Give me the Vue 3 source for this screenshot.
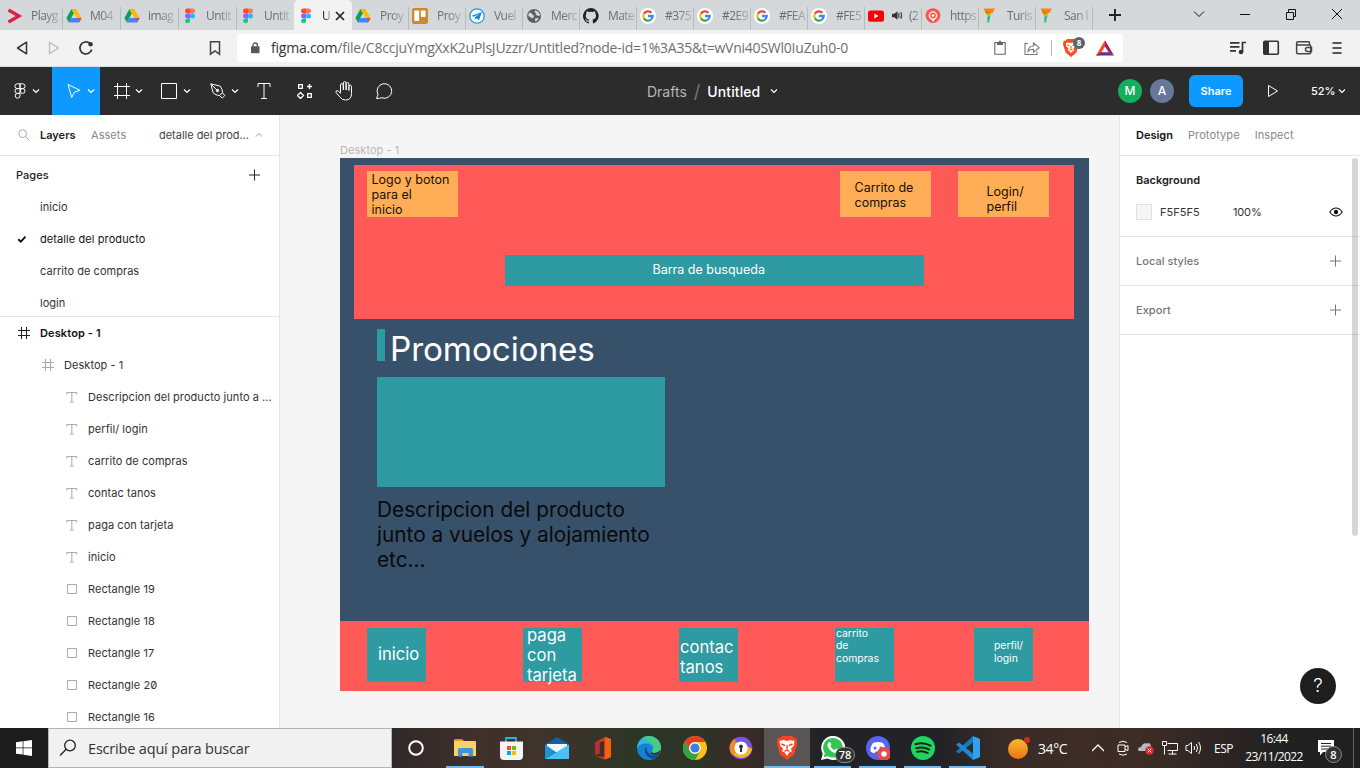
<script setup>
const tabs = [
  { icon: 'play', label: 'Playg' },
  { icon: 'drive', label: 'M04' },
  { icon: 'drive', label: 'imag' },
  { icon: 'figma', label: 'Untit' },
  { icon: 'figma', label: 'Untit' },
  { icon: 'figma', label: 'U', active: true },
  { icon: 'drive', label: 'Proy' },
  { icon: 'trello', label: 'Proy' },
  { icon: 'plane', label: 'Vuel' },
  { icon: 'globe', label: 'Merc' },
  { icon: 'github', label: 'Mate' },
  { icon: 'google', label: '#375' },
  { icon: 'google', label: '#2E9' },
  { icon: 'google', label: '#FEA' },
  { icon: 'google', label: '#FE5' },
  { icon: 'youtube', label: '(2', sound: true },
  { icon: 'pin', label: 'https' },
  { icon: 'turismo', label: 'Turis' },
  { icon: 'turismo', label: 'San l' },
]
const pages = [
  { name: 'inicio' },
  { name: 'detalle del producto', current: true },
  { name: 'carrito de compras' },
  { name: 'login' },
]
const layers = [
  { type: 'frame', name: 'Desktop - 1', level: 0 },
  { type: 'frame', name: 'Desktop - 1', level: 1 },
  { type: 'text', name: 'Descripcion del producto junto a ...', level: 2 },
  { type: 'text', name: 'perfil/ login', level: 2 },
  { type: 'text', name: 'carrito de compras', level: 2 },
  { type: 'text', name: 'contac tanos', level: 2 },
  { type: 'text', name: 'paga con tarjeta', level: 2 },
  { type: 'text', name: 'inicio', level: 2 },
  { type: 'rect', name: 'Rectangle 19', level: 2 },
  { type: 'rect', name: 'Rectangle 18', level: 2 },
  { type: 'rect', name: 'Rectangle 17', level: 2 },
  { type: 'rect', name: 'Rectangle 20', level: 2 },
  { type: 'rect', name: 'Rectangle 16', level: 2 },
]
const apps = [
  { id: 'explorer', open: true },
  { id: 'store' },
  { id: 'mail' },
  { id: 'office' },
  { id: 'edge' },
  { id: 'chrome' },
  { id: 'vpn' },
  { id: 'brave', open: true, active: true },
  { id: 'whatsapp', open: true },
  { id: 'discord', open: true },
  { id: 'spotify', open: true },
  { id: 'vscode', open: true },
]
</script>

<template>
  <div class="screen">
    <!-- Browser tab strip -->
    <header class="tabstrip">
      <div v-for="(t, i) in tabs" :key="i" class="tab" :class="{ active: t.active, late: i > 5, before: i === 4 }">
        <svg v-if="t.icon === 'play'" class="fav" viewBox="0 0 16 16"><path d="M1.5 2 12 8 1.5 14" fill="none" stroke="#dc1f43" stroke-width="3.2" /></svg>
        <svg v-else-if="t.icon === 'drive'" class="fav" viewBox="0 0 16 16">
          <path d="M5.3 1.3h5.2L5.4 10 2.9 14.4.4 10z" fill="#0f9d58" />
          <path d="M5.3 1.3h5.2l5.1 8.8h-5.2z" fill="#fbbc05" />
          <path d="M5.4 10.1h10.2L13 14.5H2.9z" fill="#4285f4" /><path d="M12.5 10.1h3.1L13 14.5z" fill="#ea4335" />
          <path d="m8 5.6 2.5 4.5H5.4z" fill="#d5d8da" />
        </svg>
        <svg v-else-if="t.icon === 'figma'" class="fav" viewBox="0 0 16 16">
          <path d="M8 .6H5.4a2.45 2.45 0 0 0 0 4.9H8z" fill="#f24e1e" /><path d="M8 .6h2.6a2.45 2.45 0 0 1 0 4.9H8z" fill="#ff7262" />
          <path d="M8 5.5H5.4a2.45 2.45 0 0 0 0 4.9H8z" fill="#a259ff" /><circle cx="10.5" cy="8" r="2.5" fill="#1abcfe" />
          <path d="M8 10.4H5.4A2.45 2.45 0 1 0 8 12.9z" fill="#0acf83" />
        </svg>
        <svg v-else-if="t.icon === 'trello'" class="fav" viewBox="0 0 16 16"><rect width="16" height="16" rx="2" fill="#cd8a33" /><rect x="2.3" y="2.5" width="4.8" height="10.5" rx=".8" fill="#fff" /><rect x="8.8" y="2.5" width="4.8" height="6.6" rx=".8" fill="#fff" /></svg>
        <svg v-else-if="t.icon === 'plane'" class="fav" viewBox="0 0 16 16"><circle cx="8" cy="8" r="7.2" fill="#fff" stroke="#2394ea" stroke-width="1.3" /><path d="M2.6 7.7 13 4l-3 8.2-2.5-2-1.6 1.5V9.2L10.5 6 4.6 8.7z" fill="#1687e0" /></svg>
        <svg v-else-if="t.icon === 'globe'" class="fav" viewBox="0 0 16 16"><circle cx="8" cy="8" r="7" fill="#5b5f63" /><path d="M3 4.8c2-.2 3 .4 3.3 1.5.3 1 1.7.8 1.7 2s-1.4 1-1.4 2.4L5 9.6 2.2 8zM9 2.4 8.4 4l1.8 1.2-.8 1.3 3 1.5 1.7-.4C13.8 5 12 2.7 9 2.4zM9 10.6l3.6-.6c-.2 1.7-1.6 3-3.5 3.6z" fill="#d5d8da" /></svg>
        <svg v-else-if="t.icon === 'github'" class="fav" viewBox="0 0 16 16"><path d="M8 0a8 8 0 0 0-2.500 15.600c.4.1.5-.2.5-.4v-1.500c-2 .5-2.600-.5-2.800-1-.1-.3-.5-1-.9-1.200-.3-.2-.7-.6 0-.6s1.100.6 1.300.9c.7 1.200 1.900.9 2.300.7.1-.5.3-.9.5-1.100-1.800-.2-3.600-.9-3.600-4 0-.8.3-1.600.8-2.100-.1-.2-.4-1 .1-2.100 0 0 .7-.2 2.200.8a7.600 7.600 0 0 1 4 0c1.500-1 2.200-.8 2.200-.8.4 1.100.2 1.900.1 2.100.5.6.8 1.300.8 2.100 0 3.100-1.900 3.800-3.700 4 .3.3.6.7.6 1.500v2.200c0 .2.1.5.5.4A8 8 0 0 0 8 0z" fill="#1f2328" /></svg>
        <svg v-else-if="t.icon === 'google'" class="fav" viewBox="0 0 16 16">
          <circle cx="8" cy="8" r="8" fill="#fff" />
          <g fill="none" stroke-width="2.3"><path d="M11.4 4.7A4.700 4.700 0 0 0 3.900 5.800" stroke="#ea4335" /><path d="M3.900 5.700a4.700 4.700 0 0 0 0 4.600" stroke="#fbbc05" /><path d="M3.900 10.200a4.700 4.700 0 0 0 7.200 1.300" stroke="#34a853" /><path d="M11.100 11.500A4.700 4.700 0 0 0 12.700 8H8" stroke="#4285f4" /></g>
        </svg>
        <svg v-else-if="t.icon === 'youtube'" class="fav" viewBox="0 0 16 16"><rect y="2.500" width="16" height="11.200" rx="2.500" fill="#f00" /><path d="m6.300 5.600 4.200 2.500-4.200 2.500z" fill="#fff" /></svg>
        <svg v-else-if="t.icon === 'pin'" class="fav" viewBox="0 0 16 16"><circle cx="8" cy="7.600" r="7.400" fill="#fb564b" /><path d="M6.400 11.600a4.300 4.300 0 1 1 3.200 0L8.200 14z" fill="#fff" /><circle cx="8" cy="7.500" r="2.900" fill="#fb564b" /><circle cx="8" cy="7.500" r="1.300" fill="#fff" /></svg>
        <svg v-else class="fav" viewBox="0 0 16 16"><path d="M1.500.4h11.500L10.500 5H4z" fill="#f58510" /><path d="M2.500 2.500 9 5 5.500 8z" fill="#e36b12" /><path d="M5 5.500h5L5.500 11z" fill="#b9c322" /><path d="m5.300 9 3.200-1.500-1.200 6.200-1.900 1.500z" fill="#36b985" /></svg>
        <svg v-if="t.sound" class="snd" viewBox="0 0 12 12"><path d="M0 4h2.500L6 1.300v9.400L2.500 8H0z" fill="#333" /><path d="M7.500 3.300v5.400M9.700 2.300q1.500 3.700 0 7.400" stroke="#333" stroke-width="1.200" fill="none" /></svg>
        <span class="label">{{ t.label }}</span>
        <svg v-if="t.active" class="close" viewBox="0 0 10 10"><path d="m1 1 8 8M9 1 1 9" stroke="#222" stroke-width="1.700" /></svg>
      </div>
      <svg class="newtab" viewBox="0 0 12 12"><path d="M6 0v12M0 6h12" stroke="#222" stroke-width="1.900" /></svg>
      <div class="winctl">
        <svg viewBox="0 0 12 12"><path d="m1 3.500 5 5 5-5" /></svg>
        <svg viewBox="0 0 12 12"><path d="M1 6.500h10" /></svg>
        <svg viewBox="0 0 12 12"><path d="M1.500 4.500h7v7h-7zM3.500 4V1.500h7v7H9" /></svg>
        <svg viewBox="0 0 12 12"><path d="m1 1 10 10M11 1 1 11" /></svg>
      </div>
    </header>

    <!-- Address bar -->
    <div class="addressbar">
      <div class="nav">
        <svg viewBox="0 0 16 16"><path d="M12.500 2.200v11.600L3.500 8z" fill="none" stroke="#333" stroke-width="1.500" stroke-linejoin="round" /></svg>
        <svg viewBox="0 0 16 16"><path d="M3.500 2.200v11.600L12.500 8z" fill="none" stroke="#b9b9b9" stroke-width="1.300" stroke-linejoin="round" /></svg>
        <svg viewBox="0 0 16 16"><path d="M13.700 9.500A6 6 0 1 1 11.800 3.400" fill="none" stroke="#333" stroke-width="1.700" /><circle cx="12.600" cy="4.300" r="2.200" fill="#333" /></svg>
      </div>
      <svg class="bookmark" viewBox="0 0 16 16"><path d="M3.500 1.700h9v12.500L8 11l-4.500 3.200z" fill="none" stroke="#444" stroke-width="1.500" /></svg>
      <div class="field">
        <svg class="lock" viewBox="0 0 10 12"><rect x="1" y="4.300" width="8.500" height="7" rx=".8" fill="#55585c" /><path d="M3 5V3.200a2.200 2.200 0 0 1 4.400 0V5" fill="none" stroke="#55585c" stroke-width="1.300" /></svg>
        <span class="url"><b>figma.com</b>/file/C8ccjuYmgXxK2uPlsJUzzr/Untitled?node-id=1%3A35&amp;t=wVni40SWl0IuZuh0-0</span>
        <svg class="clip" viewBox="0 0 16 16"><path d="M2.800 2.500h10.400v11.700H2.800z" fill="none" stroke="#666" stroke-width="1.100" /><path d="M5 2h6v3H5zM7 .8h2V3H7z" fill="#666" /></svg>
        <svg class="share" viewBox="0 0 16 16"><path d="M4 3.500H1v11h12v-3M4 11.500C4.300 7.500 6.500 6 9.500 6V3l5.700 4.700-5.700 4.500V9.300C7 9.200 5.300 10 4 11.500z" fill="none" stroke="#777" stroke-width="1.100" /></svg>
        <i class="sep"></i>
        <div class="shield">
          <svg viewBox="0 0 16 18"><path d="M4 0h8l1.500 1.700 1.800-.2.700 4-2.700 8.200L8 18l-5.300-4.300L0 5.500l.7-4 1.800.2z" fill="#f4511e" /><path d="m3 4 2.500-.5L8 4l2.500-.5L13 4l-.3 3.500-2.200 1.800.7 2-1.700 1.200L8 14l-1.500-1.500-1.700-1.200.7-2L3.300 7.500z" fill="#fff" /><path d="m4.500 6 2 .7M11.500 6l-2 .7M8 7v2.500M6.500 11 8 10l1.500 1" stroke="#f4511e" fill="none" /></svg>
          <span>8</span>
        </div>
        <svg class="bat" viewBox="0 0 18 16"><path d="M9 .3 0 15.500h3.600L9 6.500z" fill="#ff4724" /><path d="m9 .3 9 15.200-5.200-3.100L9 6.400z" fill="#9e1f63" /><path d="M0 15.500h18l-5.200-3.200H5.400z" fill="#662d91" /></svg>
      </div>
      <div class="browser-tools">
        <svg viewBox="0 0 18 16"><path d="M1 2.800h9.500M1 6.800h9.500M1 10.800h6M13.500 12V2.500H17" stroke="#333" stroke-width="1.700" fill="none" /><circle cx="12" cy="12" r="2.300" fill="#333" /></svg>
        <svg viewBox="0 0 18 16"><rect x="1.800" y="1.300" width="14.500" height="13" rx="1" fill="none" stroke="#333" stroke-width="1.600" /><path d="M2 2h5v12H2z" fill="#333" /></svg>
        <svg viewBox="0 0 18 16"><path d="M14.500 5V2.700q0-1-1-1H3.300q-1.700 0-1.700 1.700v8.900q0 1.500 1.500 1.500h11.200q1.500 0 1.500-1.500V6.400q0-1.400-1.500-1.400H3Q1.600 5 1.600 3.500M16.500 7.500h-4q-2 0-2 2t2 2h4z" fill="none" stroke="#444" stroke-width="1.500" /></svg>
        <svg viewBox="0 0 18 16"><path d="M4.500 3h9M4.500 8h9M4.500 13h9" stroke="#555" stroke-width="1.800" /></svg>
      </div>
    </div>

    <!-- Editor toolbar -->
    <nav class="toolbar">
      <div class="tool menu">
        <svg class="ti" viewBox="0 0 16 16"><path d="M8 .8H5.300a2.350 2.350 0 0 0 0 4.800H8zm0 0h2.700a2.350 2.350 0 0 1 0 4.800H8zM8 5.600H5.300a2.350 2.350 0 0 0 0 4.800H8zM8 10.400H5.300A2.400 2.400 0 1 0 8 12.800z" /><circle cx="10.600" cy="8" r="2.400" /></svg>
        <svg class="chev" viewBox="0 0 8 8"><path d="m1 2.500 3 3 3-3" /></svg>
      </div>
      <div class="tool split move">
        <svg class="ti" viewBox="0 0 16 16"><path d="m2 1.500 12 5.800-5.600 1.900-2.700 5.300z" stroke-linejoin="round" /></svg>
        <svg class="chev" viewBox="0 0 8 8"><path d="m1 2.500 3 3 3-3" /></svg>
      </div>
      <div class="tool split">
        <svg class="ti" viewBox="0 0 16 16"><path d="M3.500 0v16M12.500 0v16M0 3.500h16M0 12.500h16" /></svg>
        <svg class="chev" viewBox="0 0 8 8"><path d="m1 2.500 3 3 3-3" /></svg>
      </div>
      <div class="tool split sq">
        <svg class="ti" viewBox="0 0 16 16"><path d="M.5.500h15v15H.5z" /></svg>
        <svg class="chev" viewBox="0 0 8 8"><path d="m1 2.500 3 3 3-3" /></svg>
      </div>
      <div class="tool split">
        <svg class="ti" viewBox="0 0 16 16"><path d="M.8.800 10.300 3.200q2.400 3.300 2.200 6.600l-3 2.700Q5.800 12.500 3.200 9.800zM1 1l5.600 5.800M12.500 9.800l2.300 2.700-2.600 2.600-2.700-2.600" /><circle cx="7.500" cy="7.500" r="1.200" fill="#fff" /></svg>
        <svg class="chev" viewBox="0 0 8 8"><path d="m1 2.500 3 3 3-3" /></svg>
      </div>
      <div class="tool pull"><svg class="ti" viewBox="0 0 16 16"><path d="M2 4V.500h12V4M8 .5v15M5 15.500h6" /></svg></div>
      <div class="tool resources"><svg class="ti" viewBox="0 0 16 16"><path d="M1.700 1.700h3.600v3.600H1.700zM10.700 10.700h3.600v3.600h-3.600zM12.500 1v5M10 3.500h5M3.500 9.500l3 3-3 3-3-3z" stroke-width="1.300" /></svg></div>
      <div class="tool pull"><svg class="ti hand" viewBox="0 0 18 20"><path d="M5.500 11.500V4a1.400 1.400 0 0 1 2.800 0v5V2a1.400 1.400 0 0 1 2.800 0v7V3a1.400 1.400 0 0 1 2.800 0v6.500V5.500a1.300 1.300 0 0 1 2.600 0v7q0 6.500-6 6.500-3.500 0-5.200-2.500L1 11.500q-.5-1.500 1-1.800 1.300-.1 3.500 2.500z" /></svg></div>
      <div class="tool pull"><svg class="ti comment" viewBox="0 0 18 18"><path d="M1.500 16.500 3 12.500a7.300 7.300 0 1 1 3.800 3.300q-2.300.7-5.300.7z" stroke-linejoin="round" /></svg></div>
      <div class="doc">
        <span class="drafts">Drafts</span><span class="slash">/</span><span class="docname">Untitled</span>
        <svg class="chev" viewBox="0 0 8 8"><path d="m1 2.500 3 3 3-3" /></svg>
      </div>
      <div class="right-tools">
        <span class="avatar green">M</span><span class="avatar blue">A</span>
        <button class="share-btn">Share</button>
        <svg class="present" viewBox="0 0 12 14"><path d="M1.500 1.500 10.500 7l-9 5.500z" fill="none" stroke="#fff" stroke-linejoin="round" /></svg>
        <span class="zoom">52%</span>
        <svg class="chev" viewBox="0 0 8 8"><path d="m1 2.500 3 3 3-3" /></svg>
      </div>
    </nav>

    <main class="editor">
      <aside class="left">
        <div class="lhead">
          <svg class="search" viewBox="0 0 12 12"><circle cx="4.700" cy="4.700" r="3.900" /><path d="m7.600 7.600 3.900 3.900" /></svg>
          <b>Layers</b><span class="assets">Assets</span><span class="pagepick">detalle del prod...</span>
          <svg class="up" viewBox="0 0 8 8"><path d="m1 5.500 3-3 3 3" /></svg>
        </div>
        <section class="pages">
          <div class="phead"><span>Pages</span><svg viewBox="0 0 12 12"><path d="M6.500.500v11M1 6h11" stroke="#222" /></svg></div>
          <div v-for="p in pages" :key="p.name" class="page" :class="{ current: p.current }">
            <svg viewBox="0 0 10 10"><path v-if="p.current" d="m1.300 5.300 2.500 2.400 4.700-5" fill="none" stroke="#111" stroke-width="1.900" /></svg>
            <span>{{ p.name }}</span>
          </div>
        </section>
        <section class="layers">
          <div v-for="(l, i) in layers" :key="i" class="layer" :class="'level' + l.level">
            <svg viewBox="0 0 12 12">
              <path v-if="l.type === 'frame'" d="M3.500 0v12M8.500 0v12M0 3.500h12M0 8.500h12" />
              <path v-else-if="l.type === 'text'" d="M.8 3.500v-2h10v2M5.800 1.500v9.500M4 11h3.600" />
              <path v-else d="M1.500 1.500h9v9h-9z" />
            </svg>
            <span>{{ l.name }}</span>
          </div>
        </section>
      </aside>

      <section class="canvas">
        <span class="frame-name">Desktop - 1</span>
        <div class="artboard">
          <i class="r coral top"></i>
          <i class="r orange o1"></i><i class="r orange o2"></i><i class="r orange o3"></i>
          <i class="r teal find"></i><i class="r teal mark"></i><i class="r teal promo"></i>
          <i class="r coral foot"></i>
          <i class="r teal f1"></i><i class="r teal f2"></i><i class="r teal f3"></i><i class="r teal f4"></i><i class="r teal f5"></i>
          <p class="t12 a1">Logo y boton<br />para el<br />inicio</p>
          <p class="t12 a2">Carrito de<br />compras</p>
          <p class="t12 a3">Login/<br />perfil</p>
          <p class="t12 a4">Barra de busqueda</p>
          <p class="big">Promociones</p>
          <p class="desc">Descripcion del producto<br />junto a vuelos y alojamiento<br />etc...</p>
          <p class="t16 b1">inicio</p>
          <p class="t16 b2">paga<br />con<br />tarjeta</p>
          <p class="t16 b3">contac<br />tanos</p>
          <p class="t10 b4">carrito<br />de<br />compras</p>
          <p class="t10 b5">perfil/<br />login</p>
        </div>
      </section>

      <aside class="inspector">
        <div class="rhead"><b>Design</b><span>Prototype</span><span>Inspect</span></div>
        <section class="bgsec">
          <h3>Background</h3>
          <div class="fill">
            <i class="swatch"></i><span class="hex">F5F5F5</span><span class="pct">100%</span>
            <svg viewBox="0 0 14 10"><path d="M.8 5Q3.500 1 7 1t6.200 4Q10.500 9 7 9T.8 5z" fill="none" stroke="#111" stroke-width="1.200" /><circle cx="7" cy="5" r="2.200" fill="#111" /></svg>
          </div>
        </section>
        <section class="rowsec"><span>Local styles</span><svg viewBox="0 0 12 12"><path d="M6.500.5v11M1 6h11" stroke="#777" /></svg></section>
        <section class="rowsec"><span>Export</span><svg viewBox="0 0 12 12"><path d="M6.500.5v11M1 6h11" stroke="#777" /></svg></section>
        <i class="scroll"></i>
        <button class="help">?</button>
      </aside>
    </main>

    <!-- Windows taskbar -->
    <footer class="taskbar">
      <div class="start"><svg viewBox="0 0 16 16"><path d="M0 2.200 6.700 1.300v6.300H0zM7.400 1.200 16 0v7.600H7.400zM0 8.300h6.700v6.300L0 13.700zM7.400 8.300H16V16l-8.600-1.200z" fill="#fff" /></svg></div>
      <div class="searchbox">
        <svg viewBox="0 0 18 18"><circle cx="11" cy="6.500" r="5.300" /><path d="M7.200 10.300 1 16.500" /></svg>
        <span>Escribe aquí para buscar</span>
      </div>
      <div class="cortana"><svg viewBox="0 0 16 16"><circle cx="8" cy="8" r="6.800" fill="none" stroke="#fff" stroke-width="2" /></svg></div>
      <div v-for="a in apps" :key="a.id" class="app" :class="{ open: a.open, active: a.active }">
        <svg v-if="a.id === 'explorer'" viewBox="0 0 24 24"><path d="M1 4q0-1 1-1h7l2 2H1z" fill="#d99a16" /><path d="M1 5h21q1 0 1 1v14H1z" fill="#fcd062" /><path d="M5 13.500q0-1.500 1.500-1.500h12q1.500 0 1.500 1.500v7h-4.500V17h-6v3.500H5z" fill="#3f95d6" /></svg>
        <svg v-else-if="a.id === 'store'" viewBox="0 0 24 24"><path d="M7 7V2h10v5" fill="none" stroke="#20b4e8" stroke-width="1.800" /><path d="M1 5.500h23V20q0 4-4 4H5q-4 0-4-4z" fill="#f4f4f4" /><path d="M8 10h4v4H8z" fill="#f25022" /><path d="M13 10h4v4h-4z" fill="#7fba00" /><path d="M8 15h4v4H8z" fill="#00a4ef" /><path d="M13 15h4v4h-4z" fill="#ffb900" /></svg>
        <svg v-else-if="a.id === 'mail'" viewBox="0 0 24 24"><path d="M0 8.500 12 1l12 7.500V15H0z" fill="#0f60a8" /><path d="M2 8h20v8H2z" fill="#f4f4f4" /><path d="M0 8.500 11 16 0 23z" fill="#218fdc" /><path d="M24 8.500 0 23h24z" fill="#48c2f4" /></svg>
        <svg v-else-if="a.id === 'office'" viewBox="0 0 24 24"><path d="M4 6.500 14 1l6 2v18l-6 2.500-10-3.500 9 1V5L8.500 6.500v11L4 19z" fill="#d3371f" /><path d="m14 1 6 2v18l-6 2.500z" fill="#f2630f" /><path d="M4 6.500 8.500 4v13L4 19z" fill="#c0283c" /></svg>
        <svg v-else-if="a.id === 'edge'" viewBox="0 0 24 24"><circle cx="12" cy="12" r="12" fill="#1782d4" /><path d="M.2 10A12 12 0 0 1 24 11c0 4-3 6-6.500 6-2 0-3.500-1-2-2.500 2-4-2-7.500-7-7Q3 7.500.2 12z" fill="#2cb8d8" /><path d="M12 0a12 12 0 0 1 12 11c0 4-3 6-6.500 6-2 0-3.500-1-2-2.500C18 10 15 5 5 2.300Q8 0 12 0z" fill="#51cf6b" opacity=".8" /><path d="M9 10.500c-3 5 0 11 7 12.500 3-1 5-3 6-5-6 3-12 1-13-7.500z" fill="#0d4e94" /><path d="M15 14.800c-1.300 1.400.5 2.200 2.500 2.200q3.500-.2 5.500-2.800L22 18q-4 1.800-8.500-.5Z" fill="#322f29" /></svg>
        <svg v-else-if="a.id === 'chrome'" viewBox="0 0 24 24"><circle cx="12" cy="12" r="12" fill="#fbc116" /><path d="M1.600 6A12 12 0 0 1 22.400 6H12a6 6 0 0 0-5.200 9z" fill="#e33b2e" /><path d="M1.600 6A12 12 0 0 0 12 24l5.200-9A6 6 0 0 1 6.800 15z" fill="#2fa24c" /><circle cx="12" cy="12" r="5.800" fill="#fff" /><circle cx="12" cy="12" r="4.600" fill="#3c7dea" /></svg>
        <svg v-else-if="a.id === 'vpn'" viewBox="0 0 24 24"><circle cx="12" cy="12" r="11.300" fill="#7a55e0" /><path d="M.9 9.500A11.300 11.300 0 0 0 23.200 13l-5-3-12-4z" fill="#f4b62c" /><path d="M6 2.400A11.300 11.300 0 0 0 3 19l5-3z" fill="#f0882c" /><circle cx="12" cy="12" r="6.600" fill="#fff" /><path d="M12 8.500a2 2 0 0 1 1 3.700V16h-2v-3.800a2 2 0 0 1 1-3.700z" fill="#303044" /></svg>
        <svg v-else-if="a.id === 'brave'" viewBox="0 0 24 24"><path d="M7 0h10l2 2 2.500.3.700 5-3 11L12 24l-7.200-5.700-3-11 .7-5L5 2z" fill="#fb4322" /><path d="m4.500 5 4-1L12 5l3.500-1 4 1-.8 5-2.700 2.500.8 3-2.600 1L12 20l-2.200-3.500-2.600-1 .8-3L5.300 10z" fill="#fff" /><path d="m6.500 8 3.500 1.500M17.500 8 14 9.500M12 9v4M9.500 15.500l2.500-1.700 2.500 1.700" stroke="#fb4322" stroke-width="1.400" fill="none" /></svg>
        <svg v-else-if="a.id === 'whatsapp'" viewBox="0 0 24 24"><path d="m0 24 1.700-6.200A12 12 0 1 1 6.300 22.400z" fill="#fff" /><path d="m2.700 21.300 1.100-4A9.800 9.800 0 1 1 6.900 20.200z" fill="#31c553" /><path d="M7.500 6.500q1.500-1 2 .2l.8 2-.9 1.500q1.400 2.700 4.300 3.900l1.400-1.600 2.700 1.300q.3 3-3 3.400-5-.6-8.200-6.600-.5-2.600.9-4.100z" fill="#fff" /></svg>
        <svg v-else-if="a.id === 'discord'" viewBox="0 0 24 24"><circle cx="12" cy="12" r="12" fill="#5964ec" /><path d="M7 7q5-2 10 0 3 4 2.500 8.500-2 1.700-4 1.700l-1-1.700h-5l-1 1.700q-2 0-4-1.700Q4 11 7 7z" fill="#fff" /><circle cx="9" cy="12" r="1.500" fill="#5964ec" /><circle cx="15" cy="12" r="1.500" fill="#5964ec" /><circle cx="18" cy="18" r="7" fill="#e44d4f" /><circle cx="18" cy="18" r="2.700" fill="#fff" /></svg>
        <svg v-else-if="a.id === 'spotify'" viewBox="0 0 24 24"><circle cx="12" cy="12" r="12" fill="#1fd661" /><path d="M4.500 8.200q8-2.400 15 1.500M5.300 12.200q7-2 12.800 1.300M6 15.800q6-1.600 10.700 1.200" fill="none" stroke="#172119" stroke-width="2" stroke-linecap="round" /></svg>
        <svg v-else viewBox="0 0 24 24"><path d="m17 0 7 3v18l-7 3z" fill="#30a2ed" /><path d="M17 0v6.500L3 17.500 0 15.500z" fill="#1479bd" /><path d="M17 24v-6.500L3 6.500 0 8.500z" fill="#2087d0" /></svg>
        <span v-if="a.id === 'whatsapp'" class="badge">78</span>
      </div>
      <div class="tray">
        <svg class="sun" viewBox="0 0 22 22"><defs><linearGradient id="sun" x2="0" y2="1"><stop stop-color="#f6b82e" /><stop offset="1" stop-color="#ee7414" /></linearGradient></defs><circle cx="10" cy="12" r="10" fill="url(#sun)" /><circle cx="19" cy="3" r="3" fill="#d32c1d" /></svg>
        <span class="temp">34°C</span>
        <svg class="i-up" viewBox="0 0 12 12"><path d="m0 9 6-6 6 6" /></svg>
        <svg class="i-meet" viewBox="0 0 12 16"><path d="M1 5h7v6.500H1zM8 7l3-1.500v5L8 9.500M2 2.500q4-2.500 8 0M2 14q4 2.500 8 0" /></svg>
        <svg class="i-cloud" viewBox="0 0 16 14"><path d="M0 9q0-3 3-3 2-5 6-3.500Q12 1 13 5v5H2Q0 10 0 9z" fill="#bbb" stroke="none" /><circle cx="11.500" cy="9.500" r="4.300" fill="#d92c33" stroke="none" /><path d="m9.700 7.700 3.600 3.600m0-3.600-3.600 3.600" /></svg>
        <svg class="i-net" viewBox="0 0 16 14"><path d="M5.500 2.500h10v7h-10M.5.500h4v4h-4zM2.500 4.500v9M10.500 9.500v4M6.500 13h8" /></svg>
        <svg class="i-vol" viewBox="0 0 16 14"><path d="M.5 4.500h2L6 1.500v11l-3.500-3h-2zM8.500 5q1.300 2 0 4M10.800 3q2.600 4 0 8M13 1q4 6 0 12" /></svg>
        <span class="lang">ESP</span>
        <div class="clock"><span>16:44</span><span>23/11/2022</span></div>
        <div class="notif"><svg viewBox="0 0 16 16"><path d="M0 0h16v12H5l-3 3.500V12H0z" fill="#fff" stroke="none" /><path d="M3 3.500h10M3 6.200h10M3 9h7" stroke="#222" /></svg><span class="badge">8</span></div>
      </div>
    </footer>
  </div>
</template>

<style>
body { overflow: hidden; }
</style>

<style scoped>
* { box-sizing: border-box; }
.screen { width: 1360px; height: 768px; display: flex; flex-direction: column; overflow: hidden; font-family: Inter, "Liberation Sans", sans-serif; font-size: 11px; color: #333; }
svg { display: block; flex: none; }

.tabstrip { height: 30px; flex: none; background: #d5d8da; display: flex; padding-left: 4px; font-family: "Open Sans", "Noto Sans", sans-serif; font-size: 12px; color: #6a6d70; }
.tab { position: relative; width: 58px; flex: none; display: flex; align-items: center; padding: 1px 0 0 4px; }
.tab.late { width: 57px; padding-left: 3px; }
.tab:first-child { padding-left: 3px; }
.tab::after { content: ""; position: absolute; right: -1px; top: 7px; bottom: 0; width: 1px; background: #b8bbbd; }
.tab.late::after { right: 0; }
.tab.active { background: #f2f2f2; border-radius: 5px 5px 0 0; }
.tab.active::after, .tab.before::after { display: none; }
.fav { width: 16px; height: 16px; margin-right: 8px; }
.label { white-space: nowrap; letter-spacing: -.55px; line-height: 18px; padding-right: 1px; -webkit-mask-image: linear-gradient(90deg, #000 45%, rgba(0, 0, 0, .3) 100%); mask-image: linear-gradient(90deg, #000 45%, rgba(0, 0, 0, .3) 100%); }
.late .fav { margin-right: 9px; }
.active .label { color: #222; width: 8px; }
.close { width: 10px; height: 10px; margin-left: 5px; }
.snd { width: 11px; height: 11px; margin: 0 6px 0 -1px; }
.newtab { width: 12px; height: 12px; margin: 9px 0 0 16px; }
.winctl { margin-left: auto; display: flex; gap: 34px; padding: 8px 17px 0 0; }
.winctl svg { width: 12px; height: 12px; fill: none; stroke: #111; stroke-width: 1; }

.addressbar { height: 37px; flex: none; background: #f2f2f2; border-bottom: 1px solid #dcdcdc; display: flex; align-items: center; position: relative; }
.nav { display: flex; gap: 16px; padding-left: 14px; }
.nav svg, .bookmark { width: 16px; height: 16px; }
.bookmark { margin-left: 113px; }
.field { width: 886px; height: 28px; margin-left: 14px; background: #fff; border-radius: 4px; display: flex; align-items: center; padding-left: 13px; }
.lock { width: 10px; height: 12px; }
.url { width: 600px; margin-left: 11px; font: 14px/20px "Open Sans", "Noto Sans", sans-serif; letter-spacing: -.23px; color: #6c6f72; white-space: nowrap; }
.url b { font-weight: 400; color: #303336; }
.clip { width: 16px; height: 16px; margin-left: 121px; }
.share { width: 16px; height: 16px; margin-left: 16px; }
.sep { width: 1px; height: 16px; background: #bbb; margin-left: 11px; }
.shield { position: relative; margin-left: 11px; width: 16px; height: 18px; }
.shield span { position: absolute; left: 10px; top: -2px; width: 12px; height: 12px; border-radius: 6px; background: #5c6370; color: #fff; font: 700 8px/12px "Open Sans", sans-serif; text-align: center; }
.bat { width: 18px; height: 16px; margin-left: 17px; }
.browser-tools { display: flex; gap: 15px; margin-left: auto; padding-right: 13px; position: relative; left: -1px; }
.browser-tools svg { width: 18px; height: 16px; }

.toolbar { position: relative; height: 48px; flex: none; background: #2c2c2c; display: flex; color: #fff; }
.tool { width: 40px; display: flex; align-items: center; justify-content: center; }
.tool.menu { width: 52px; gap: 4px; justify-content: flex-start; padding-left: 12px; }
.tool.split { width: 48px; gap: 5px; justify-content: flex-start; padding-left: 14px; }
.tool.split.sq { padding-left: 13px; gap: 6px; }
.tool.move { background: #0d99ff; }
.ti { width: 16px; height: 16px; fill: none; stroke: #fff; stroke-width: 1; }
.tool.resources { padding-left: 2px; }
.tool.pull { padding-right: 1px; }
.ti.hand { width: 18px; height: 20px; }
.ti.comment { width: 18px; height: 18px; }
.chev { width: 8px; height: 8px; fill: none; stroke: #fff; stroke-width: 1.200; }
.doc { display: flex; align-items: center; margin-left: 243px; font-size: 14px; }
.drafts { color: #b5b5b5; }
.slash { color: #777; font-size: 18px; margin: 0 7px; }
.docname { font-weight: 500; letter-spacing: .1px; }
.doc .chev { margin-left: 10px; }
.right-tools { margin-left: auto; display: flex; align-items: center; padding-right: 14px; font-weight: 500; }
.avatar { width: 24px; height: 24px; border-radius: 50%; text-align: center; line-height: 24px; font-size: 12px; margin-right: 8px; }
.green { background: #14ae5c; }
.blue { background: #667799; }
.share-btn { margin-left: 7px; width: 54px; height: 32px; padding: 0; border: 0; border-radius: 6px; background: #0d99ff; color: #fff; font: 600 11px Inter, sans-serif; }
.present { width: 12px; height: 14px; margin-left: 24px; }
.zoom { margin: 0 5px 0 32px; width: 22px; }

.editor { flex: 1; min-height: 0; display: flex; }
.left { width: 280px; flex: none; background: #fff; border-right: 1px solid #e5e5e5; display: flex; flex-direction: column; letter-spacing: .055px; }
.lhead { height: 41px; flex: none; border-bottom: 1px solid #e5e5e5; display: flex; align-items: center; padding-left: 18px; white-space: nowrap; }
.search { width: 12px; height: 12px; fill: none; stroke: #aaa; }
.lhead b { font-weight: 600; margin-left: 10px; width: 51px; color: #222; letter-spacing: 0; }
.assets { color: #888; width: 68px; }
.pagepick { width: 96px; letter-spacing: -.02px; color: #444; }
.up { width: 8px; height: 8px; fill: none; stroke: #999; }
.pages { height: 161px; flex: none; border-bottom: 1px solid #e5e5e5; overflow: hidden; }
.phead { height: 35px; display: flex; align-items: center; justify-content: space-between; padding: 3px 19px 0 16px; font-weight: 500; color: #222; }
.phead svg { width: 12px; height: 12px; }
.page { height: 32px; display: flex; align-items: center; gap: 13px; padding-left: 17px; letter-spacing: .03px; }
.page svg { width: 10px; height: 10px; }
.page.current { color: #111; letter-spacing: .09px; }
.layers { flex: 1; min-height: 0; overflow: hidden; font-variant-numeric: slashed-zero; }
.layer { height: 32px; display: flex; align-items: center; gap: 10px; white-space: nowrap; }
.layer svg { width: 12px; height: 12px; fill: none; stroke: #aaa; }
.level0 { padding-left: 18px; font-weight: 600; color: #111; letter-spacing: .12px; }
.level0 svg { stroke: #222; }
.level1 { padding-left: 42px; }
.level2 { padding-left: 66px; }

.canvas { flex: 1; position: relative; background: #f5f5f5; overflow: hidden; }
.frame-name { position: absolute; left: 60px; top: 28px; color: #b8b8b8; line-height: 14px; letter-spacing: .05px; }
.artboard { position: absolute; left: 60px; top: 43px; width: 749px; height: 533px; background: #37516b; }
.r { position: absolute; }
.coral { background: #ff5a58; }
.orange { background: #ffae57; }
.teal { background: #2e9aa2; }
.top { left: 14px; top: 7px; width: 720px; height: 154px; }
.o1, .o2, .o3 { top: 13px; width: 91px; height: 46px; }
.o1 { left: 27px; }
.o2 { left: 500px; }
.o3 { left: 618px; }
.find { left: 165px; top: 97px; width: 419px; height: 31px; }
.mark { left: 37px; top: 171px; width: 8px; height: 32px; }
.promo { left: 37px; top: 219px; width: 288px; height: 110px; }
.foot { left: 0; top: 463px; width: 749px; height: 70px; }
.f1, .f2, .f3, .f4, .f5 { top: 470px; width: 59px; height: 54px; }
.f1 { left: 27px; }
.f2 { left: 183px; }
.f3 { left: 339px; }
.f4 { left: 495px; }
.f5 { left: 634px; height: 53px; }
.artboard p { position: absolute; margin: 0; white-space: nowrap; color: #fff; }
.artboard .t12 { font-size: 12.500px; line-height: 15px; color: #16100a; }
.a1 { left: 31.500px; top: 14px; }
.a2 { left: 514.500px; top: 21.500px; }
.a3 { left: 646.500px; top: 26px; }
.artboard .a4 { left: 312.500px; top: 104px; color: #fff; }
.artboard .big { left: 50px; top: 171px; font-size: 33.300px; line-height: 40px; letter-spacing: -.12px; }
.artboard .desc { left: 37px; top: 339px; font-size: 20.800px; line-height: 25.200px; color: #0a0a0a; }
.t16 { font-size: 16.600px; line-height: 20px; }
.t10 { font-size: 10.400px; line-height: 12.600px; }
.b1 { left: 38px; top: 486px; }
.b2 { left: 187px; top: 467px; }
.b3 { left: 340px; top: 479px; }
.b4 { left: 496px; top: 469.500px; }
.b5 { left: 654px; top: 482px; }

.inspector { position: relative; width: 241px; flex: none; background: #fff; border-left: 1px solid #e5e5e5; letter-spacing: .05px; }
.rhead { height: 41px; border-bottom: 1px solid #e5e5e5; display: flex; align-items: center; padding-left: 16px; gap: 15px; color: #888; letter-spacing: .1px; }
.rhead b { font-weight: 600; color: #111; letter-spacing: 0; }
.bgsec { height: 81px; border-bottom: 1px solid #e5e5e5; padding: 16px 17px 0 16px; }
.bgsec h3 { margin: 0; font-size: 11px; line-height: 16px; font-weight: 600; color: #222; letter-spacing: 0; }
.fill { display: flex; align-items: center; margin-top: 16px; height: 16px; }
.swatch { width: 16px; height: 16px; background: #f5f5f5; border: 1px solid #dedede; }
.hex { margin-left: 8px; width: 73px; }
.pct { flex: 1; letter-spacing: -.15px; }
.fill svg { width: 14px; height: 10px; }
.rowsec { height: 49px; border-bottom: 1px solid #e5e5e5; display: flex; align-items: center; justify-content: space-between; padding: 0 19px 0 16px; color: #777; font-weight: 500; }
.rowsec svg { width: 12px; height: 12px; }
.scroll { position: absolute; left: 232px; top: 43px; width: 6px; height: 378px; border-radius: 3px; background: rgba(0, 0, 0, .16); }
.help { position: absolute; left: 180px; top: 553px; width: 36px; height: 36px; padding: 0; border: 0; border-radius: 50%; background: #1e1e1e; color: #fff; font: 300 19px/36px Inter, sans-serif; }

.taskbar { height: 40px; flex: none; display: flex; color: #fff; font-family: "Open Sans", "Noto Sans", sans-serif; background: linear-gradient(90deg, #1e1e1e 0, #1e1e1e 380px, #302828 392px, #40312a 480px, #3e332b 550px, #2d3626 640px, #2e3426 700px, #392b28 745px, #222326 820px, #222326 940px, #3b2c27 1010px, #3e2c26 1140px, #2a2423 1230px, #202021 1300px); }
.start { width: 48px; display: flex; align-items: center; justify-content: center; background: #1c1c1c; }
.start svg { width: 16px; height: 16px; }
.searchbox { width: 344px; background: #f1f1f1; border: 1px solid #b5b5b5; display: flex; align-items: center; padding-left: 10px; font-size: 14.500px; letter-spacing: -.18px; color: #333; }
.searchbox svg { width: 18px; height: 18px; margin-right: 11px; fill: none; stroke: #222; stroke-width: 1.300; }
.cortana { width: 50px; padding-right: 2px; display: flex; align-items: center; justify-content: center; }
.cortana svg { width: 16px; height: 16px; }
.app { position: relative; width: 46px; flex: none; display: flex; align-items: center; justify-content: center; }
.app > svg { width: 24px; height: 24px; }
.app.open::after { content: ""; position: absolute; left: 4px; right: 4px; bottom: 0; height: 2px; background: #76b9ed; }
.app.active { background: #5a5555; }
.app.active ~ .app { width: 45px; }
.app.active::after { left: 0; right: 0; }
.badge { position: absolute; width: 20px; height: 16px; border: 1px solid #888; border-radius: 8px; background: #333; color: #fff; font-size: 11px; font-weight: 600; line-height: 14px; text-align: center; }
.app .badge { left: 25px; top: 19px; }
.tray { flex: 1; display: flex; align-items: center; padding-left: 18px; }
.tray svg { fill: none; stroke: #fff; }
.tray svg.sun { width: 22px; height: 22px; stroke: none; }
.temp { width: 54px; margin-left: 8px; font-size: 14px; letter-spacing: -.4px; }
.i-up { width: 12px; height: 12px; stroke-width: 1.300; }
.i-meet { width: 12px; height: 16px; margin-left: 13px; }
.i-cloud { width: 16px; height: 14px; margin-left: 9px; }
.i-net { width: 16px; height: 14px; margin-left: 8px; }
.i-vol { width: 17px; height: 14px; margin-left: 7px; }
.lang { margin-left: 12px; width: 30px; font-size: 12px; letter-spacing: -.5px; }
.clock { width: 60px; display: flex; flex-direction: column; align-items: center; font-size: 12px; line-height: 18px; letter-spacing: -.6px; }
.notif { position: relative; margin-left: 14px; width: 36px; height: 40px; border-right: 1px solid #666; padding-top: 12px; }
.notif svg { width: 16px; height: 16px; }
.notif .badge { left: 7px; top: 18px; width: 17px; height: 17px; line-height: 15px; border-radius: 9px; }
</style>
